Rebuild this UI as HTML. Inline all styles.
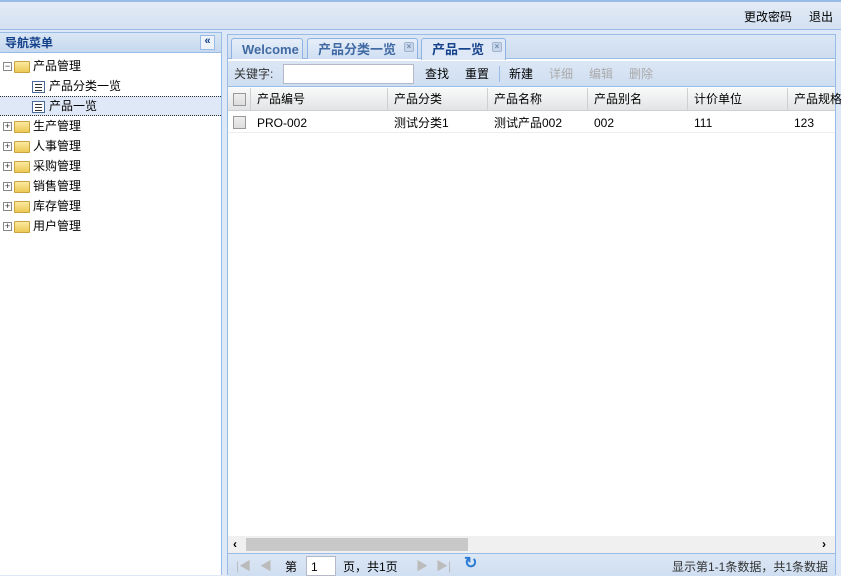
<!DOCTYPE html>
<html><head><meta charset="utf-8"><style>
*{margin:0;padding:0;box-sizing:border-box}
body{width:841px;height:575px;overflow:hidden;background:#dfe8f6;font:12px/14px "Liberation Sans","Noto Sans CJK SC",sans-serif;position:relative;color:#000}
.abs{position:absolute;line-height:14px}
#top{left:0;top:0;width:841px;height:30px;background:linear-gradient(#e3ebf6,#d3e1f1);border-top:2px solid #99bbe8;border-bottom:1px solid #99bbe8}
#left{left:0;top:32px;width:222px;height:543px;background:#fff;border-right:1px solid #99bbe8;border-top:1px solid #99bbe8}
#lh{left:0;top:0;width:221px;height:20px;background:linear-gradient(#dae6f4,#c7d9ef);border-bottom:1px solid #99bbe8;color:#15428b;font-weight:bold;font-size:12px;padding:3px 5px}
.tr{position:absolute;left:0;width:221px;height:20px}
.tr>.abs{top:3px}
.pm{position:absolute;width:9px;height:9px;border:1px solid #888;background:#fff;font-size:9px;line-height:7px;text-align:center;color:#333;top:6px}
.fold{position:absolute;top:5px;width:16px;height:12px;background:linear-gradient(#fbe9a0,#ecc855);border:1px solid #c9a43e;border-radius:1px}
.leaf{position:absolute;top:5px;width:13px;height:12px;border:1px solid #4a6a9a;background:#fff}
.leaf:before{content:"";position:absolute;left:2px;top:2px;width:7px;height:1px;background:#333;box-shadow:0 3px 0 #333,0 6px 0 #333}
#right{left:227px;top:34px;width:609px;height:541px;border:1px solid #99bbe8;background:#fff}
#tabs{left:0;top:0;width:607px;height:24px;background:linear-gradient(#dce7f5,#cddcef);border-bottom:1px solid #99bbe8}
.tab{position:absolute;top:3px;height:21px;border:1px solid #8db2e3;border-bottom:none;border-radius:3px 3px 0 0;background:linear-gradient(#e6eef8,#cfdff3);color:#416aa3;font-weight:bold;font-size:13px;line-height:15px;padding:3px 0 0 10px}
.x{position:absolute;top:3px;width:10px;height:10px;border-radius:2px;background:#c8d6ea;border:1px solid #9fb4d2;font-size:8px;line-height:8px;text-align:center;color:#7088aa;font-weight:bold}
#tb{left:0;top:26px;width:607px;height:26px;background:linear-gradient(#dce7f5,#cfdef1);border-bottom:1px solid #99bbe8}
#hd{left:0;top:53px;width:607px;height:23px;background:linear-gradient(#f9f9f9,#e3e4e6);border-bottom:1px solid #d0d0d0}
.c{position:absolute;top:0;height:100%;border-right:1px solid #d0d0d0;padding:4px 6px;line-height:14px}
.cb{position:absolute;width:13px;height:13px;border:1px solid #999;background:linear-gradient(#eee,#ddd)}
#row{left:0;top:77px;width:607px;height:21px;border-bottom:1px solid #ededed}
#row .c{border:none;padding:4px 6px}
#sb{left:0;top:501px;width:607px;height:17px;background:#f0f0f0}
#pg{left:0;top:518px;width:607px;height:23px;background:linear-gradient(#dce7f5,#cfdef1);border-top:1px solid #99bbe8}
</style></head><body>
<div id="top" class="abs"><span class="abs" style="left:744px;top:8px">更改密码</span><span class="abs" style="left:809px;top:8px">退出</span></div>
<div id="left" class="abs">
 <div id="lh" class="abs">导航菜单<span class="abs" style="left:200px;top:2px;width:15px;height:15px;border:1px solid #99bbe8;background:#eef3fa;color:#15428b;font-size:11px;line-height:11px;text-align:center">«</span></div>
 <div class="tr" style="top:23px"><span class="pm" style="left:3px">−</span><span class="fold" style="left:14px"></span><span class="abs" style="left:33px">产品管理</span></div>
 <div class="tr" style="top:43px"><span class="leaf" style="left:32px"></span><span class="abs" style="left:49px">产品分类一览</span></div>
 <div class="tr" style="top:63px;background:#dfe8f6;border-top:1px dotted #333;border-bottom:1px dotted #333"><span class="leaf" style="left:32px;top:4px"></span><span class="abs" style="left:49px;top:2px">产品一览</span></div>
 <div class="tr" style="top:83px"><span class="pm" style="left:3px">+</span><span class="fold" style="left:14px"></span><span class="abs" style="left:33px">生产管理</span></div>
 <div class="tr" style="top:103px"><span class="pm" style="left:3px">+</span><span class="fold" style="left:14px"></span><span class="abs" style="left:33px">人事管理</span></div>
 <div class="tr" style="top:123px"><span class="pm" style="left:3px">+</span><span class="fold" style="left:14px"></span><span class="abs" style="left:33px">采购管理</span></div>
 <div class="tr" style="top:143px"><span class="pm" style="left:3px">+</span><span class="fold" style="left:14px"></span><span class="abs" style="left:33px">销售管理</span></div>
 <div class="tr" style="top:163px"><span class="pm" style="left:3px">+</span><span class="fold" style="left:14px"></span><span class="abs" style="left:33px">库存管理</span></div>
 <div class="tr" style="top:183px"><span class="pm" style="left:3px">+</span><span class="fold" style="left:14px"></span><span class="abs" style="left:33px">用户管理</span></div>
</div>
<div id="right" class="abs">
 <div id="tabs" class="abs">
  <div class="tab" style="left:3px;width:72px">Welcome</div>
  <div class="tab" style="left:79px;width:111px">产品分类一览<span class="x" style="left:96px">×</span></div>
  <div class="tab" style="left:193px;width:85px;background:#dfe8f6;color:#15428b;height:22px">产品一览<span class="x" style="left:70px">×</span></div>
 </div>
 <div id="tb" class="abs">
  <span class="abs" style="left:6px;top:6px;color:#333">关键字:</span>
  <span class="abs" style="left:55px;top:3px;width:131px;height:20px;background:#fff;border:1px solid #b5b8c8"></span>
  <span class="abs" style="left:197px;top:6px">查找</span><span class="abs" style="left:237px;top:6px">重置</span>
  <span class="abs" style="left:271px;top:5px;width:1px;height:16px;background:#99bbe8"></span>
  <span class="abs" style="left:281px;top:6px">新建</span>
  <span class="abs" style="left:321px;top:6px;color:#aaa">详细</span><span class="abs" style="left:361px;top:6px;color:#aaa">编辑</span><span class="abs" style="left:401px;top:6px;color:#aaa">删除</span>
 </div>
 <div id="hd" class="abs">
  <div class="c" style="left:0;width:23px"><span class="cb" style="left:5px;top:5px"></span></div>
  <div class="c" style="left:23px;width:137px">产品编号</div>
  <div class="c" style="left:160px;width:100px">产品分类</div>
  <div class="c" style="left:260px;width:100px">产品名称</div>
  <div class="c" style="left:360px;width:100px">产品别名</div>
  <div class="c" style="left:460px;width:100px">计价单位</div>
  <div class="c" style="left:560px;width:60px;white-space:nowrap;overflow:hidden">产品规格</div>
 </div>
 <div id="row" class="abs">
  <div class="c" style="left:0;width:23px"><span class="cb" style="left:5px;top:4px"></span></div>
  <div class="c" style="left:23px">PRO-002</div>
  <div class="c" style="left:160px">测试分类1</div>
  <div class="c" style="left:260px">测试产品002</div>
  <div class="c" style="left:360px">002</div>
  <div class="c" style="left:460px">111</div>
  <div class="c" style="left:560px">123</div>
 </div>
 <div id="sb" class="abs"><span class="abs" style="left:5px;top:1px;font-weight:bold">‹</span><span class="abs" style="left:18px;top:2px;width:222px;height:13px;background:#c8c8c8"></span><span class="abs" style="left:594px;top:1px;font-weight:bold">›</span></div>
 <div id="pg" class="abs">
  <span class="abs" style="left:8px;top:5px;color:#bbb">|◀</span><span class="abs" style="left:32px;top:5px;color:#bbb">◀</span>
  <span class="abs" style="left:57px;top:6px">第</span>
  <span class="abs" style="left:78px;top:2px;width:30px;height:20px;background:#fff;border:1px solid #b5b8c8;padding:3px 4px">1</span>
  <span class="abs" style="left:115px;top:6px">页，共1页</span>
  <span class="abs" style="left:188px;top:5px;color:#bbb">▶</span><span class="abs" style="left:208px;top:5px;color:#bbb">▶|</span>
  <span class="abs" style="left:236px;top:3px;color:#2a7ad5;font-size:16px;font-weight:bold">↻</span>
  <span class="abs" style="left:444px;top:6px;color:#333">显示第1-1条数据，共1条数据</span>
 </div>
</div>
</body></html>
